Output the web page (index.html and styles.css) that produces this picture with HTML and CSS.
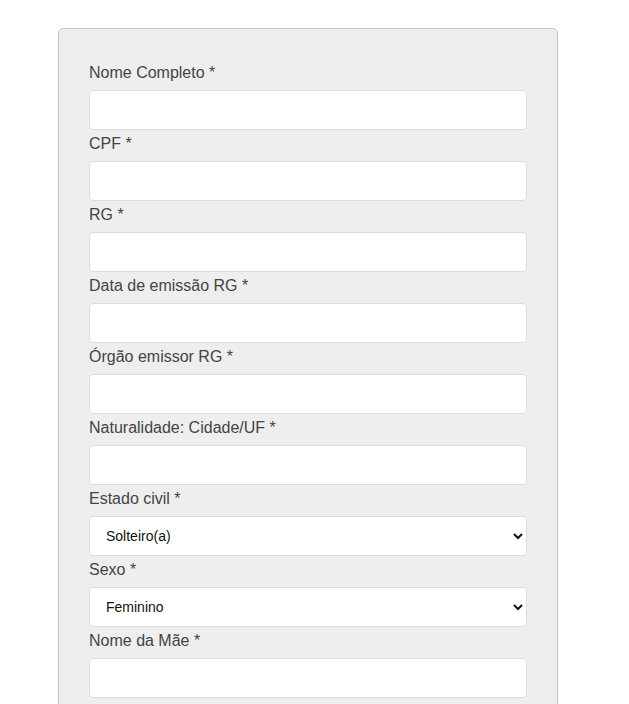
FILE: index.html
```html
<!DOCTYPE html>
<html lang="pt-BR">
<head>
<meta charset="utf-8">
<title>Cadastro</title>
<link rel="stylesheet" href="styles.css">
</head>
<body>
<div class="card">
  <form class="form">
    <label class="label" for="nome">Nome Completo *</label>
    <input class="field" id="nome" type="text">
    <label class="label" for="cpf">CPF *</label>
    <input class="field" id="cpf" type="text">
    <label class="label" for="rg">RG *</label>
    <input class="field" id="rg" type="text">
    <label class="label" for="data">Data de emissão RG *</label>
    <input class="field" id="data" type="text">
    <label class="label" for="orgao">Órgão emissor RG *</label>
    <input class="field" id="orgao" type="text">
    <label class="label" for="nat">Naturalidade: Cidade/UF *</label>
    <input class="field" id="nat" type="text">
    <label class="label" for="civil">Estado civil *</label>
    <select class="field select" id="civil">
      <option>Solteiro(a)</option>
      <option>Casado(a)</option>
    </select>
    <label class="label" for="sexo">Sexo *</label>
    <select class="field select" id="sexo">
      <option>Feminino</option>
      <option>Masculino</option>
    </select>
    <label class="label" for="mae">Nome da Mãe *</label>
    <input class="field" id="mae" type="text">
  </form>
</div>
</body>
</html>
```

FILE: styles.css
```css
html, body {
  margin: 0;
  padding: 0;
  background: #ffffff;
}
body {
  padding: 28px 0 0 58px;
  font-family: "Liberation Sans", Arial, sans-serif;
}
.card {
  box-sizing: border-box;
  width: 500px;
  background: #eeeeee;
  border: 1px solid #c4c4c4;
  border-radius: 5px;
  padding: 30px 30px 40px 30px;
}
.form {
  display: flex;
  flex-direction: column;
}
.label {
  display: block;
  margin: 4px 0 7px 0;
  font-size: 16px;
  line-height: 20px;
  color: #444444;
}
.field {
  box-sizing: border-box;
  width: 100%;
  height: 40px;
  margin: 0;
  border: 1px solid #dddddd;
  border-radius: 4px;
  background: #ffffff;
  padding: 0 12px;
  font-family: "Liberation Sans", Arial, sans-serif;
  font-size: 14px;
  color: #222222;
  outline: none;
}
.select {
  font-size: 14px;
  color: #111111;
  padding: 0 8px 0 12px;
}
```
